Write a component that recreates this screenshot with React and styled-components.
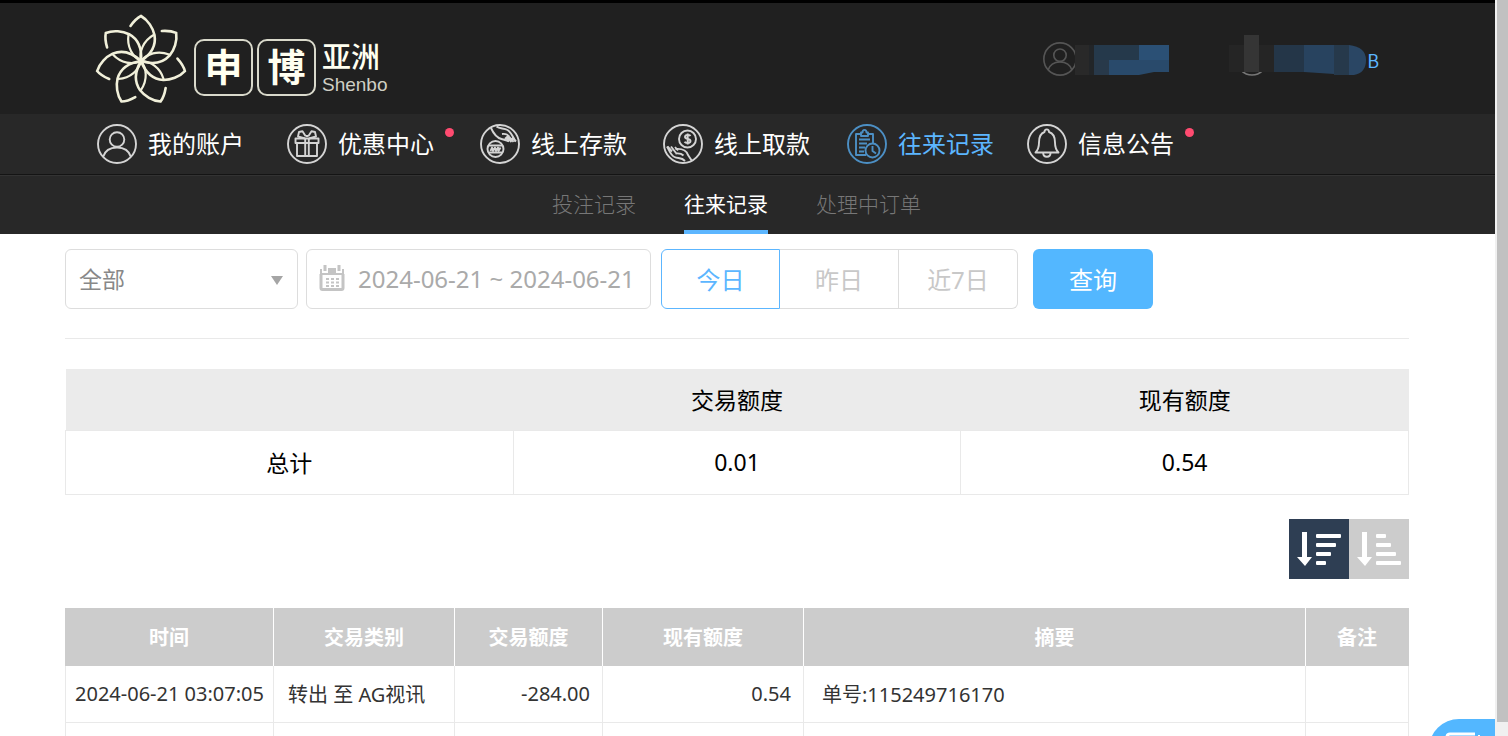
import { useState } from "react";
import styled, { createGlobalStyle } from "styled-components";

const navItems = [
    { label: "我的账户", icon: "user" },
    { label: "优惠中心", icon: "gift", dot: true },
    { label: "线上存款", icon: "deposit" },
    { label: "线上取款", icon: "withdraw" },
    { label: "往来记录", icon: "record", active: true },
    { label: "信息公告", icon: "bell", dot: true },
];

const subItems = ["投注记录", "往来记录", "处理中订单"];

const ranges = ["今日", "昨日", "近7日"];

const records = [
    { time: "2024-06-21 03:07:05", type: "转出 至 AG视讯", amount: "-284.00", balance: "0.54", summary: "单号:115249716170", remark: "" },
    { time: "", type: "", amount: "", balance: "", summary: "", remark: "" },
];

const iconShapes = {
    user: (
        <>
            <circle cx="20" cy="15.5" r="7.3" />
            <path d="M6 33C8 26.5 13 23.5 20 23.5S32 26.5 34 33" />
        </>
    ),
    gift: (
        <>
            <path d="M8.5 14.5h23v4.5h-23zM10 19h20v13H10zM18.2 14.5V32M21.8 14.5V32" />
            <path d="M18 14.5L11 12.5 12 8l3.5-.8L18.5 12M22 14.5l7-2L28 8l-3.5-.8L21.5 12M18.5 12h3" />
        </>
    ),
    deposit: (
        <>
            <path d="M11 4C13 8.5 16 13.5 21.5 15c3 .8 5.500 1.200 7.500 2.500M16.500 2.500c3 2.500 7 1.500 11 3.500 4 2.500 5.500 7 8 11.500" />
            <path d="M22 10c3-.5 5.500.3 7 2.500l4.500 5.500M25 15l2-2 4.500 5M29 17.500l-3-3.500M36 17.500l-4-4" />
            <circle cx="15.500" cy="25" r="8" />
            <path d="M9 21.500h13M9 28.500h13" />
            <path d="M10.500 27l1.500-3.500 1 3.500 2-3.500 1 3.500 2-3.500.5 3.500 2-3.500" />
        </>
    ),
    withdraw: (
        <>
            <circle cx="24.500" cy="15" r="8.500" />
            <path d="M27.500 12c-1-1.500-5.500-1.500-5.500 1 0 2.800 5.500 1.200 5.500 4 0 2.500-4.800 2.500-6 .8M24.700 9.500v11" />
            <path d="M4 22.500c2.500 4 3.500 8.500 7.500 10.500 3.500 1.800 7 0 10.500 4M12.500 25c6-.5 11 1.500 12.500 6l4 6" />
            <path d="M4.500 22.500l4.500 5M8 22.500l5 6.500M12 23l3 3.500M12.500 29.500c4-.5 6 0 8 2" />
        </>
    ),
    record: (
        <>
            <path d="M14 10H9v21h10M21 10h5v9M14 8.500h1.500c0-3.500 4-3.500 4 0H21V12h-7z" />
            <path d="M12 15.500h11M12 19.500h8M12 23.500h6M12 27.500h5" />
            <circle cx="25.500" cy="26.500" r="7" />
            <path d="M25.500 22v5l3.500 2.500" />
        </>
    ),
    bell: (
        <>
            <path d="M8.500 28.500c3-3 3.500-5.500 3.500-10C12 12.500 14.500 9 17.500 8c0-3.500 4.500-3.500 4.500 0 3.500 1 6 4.500 6 10.500 0 4.500.5 7 3.500 10z" />
            <path d="M16.200 29c0 5 7.300 5 7.300 0" />
        </>
    ),
};

const CircleIcon = ({ name, size = 40 }) => (
    <svg width={size} height={size} viewBox="0 0 40 40" fill="none" stroke="currentColor" strokeWidth="1.9" strokeLinejoin="round" aria-hidden="true">
        <circle cx="20" cy="20" r="19" />
        {iconShapes[name]}
    </svg>
);

const Flower = () => (
    <svg width="94" height="94" viewBox="-47 -48 94 94" fill="none" stroke="#f1f0da" strokeLinecap="round" aria-hidden="true">
        {[0, 1, 2, 3, 4, 5, 6].map((n) => (
            <g key={n} transform={`rotate(${(n * 360) / 7})`}>
                <path d="M-10.500 -35C-7 -40 -4 -43 0 -45C7 -41 12 -33 13.500 -26C15 -17 12 -8 0 0" strokeWidth="2.6" />
                <path d="M12.500 -26C2 -20 -2 -9 0 0" strokeWidth="2.200" />
            </g>
        ))}
    </svg>
);

const UserMask = () => (
    <svg width="94" height="32" viewBox="0 0 94 32" aria-hidden="true">
        <path d="M0 2h14v30H0z" fill="#292929" />
        <path d="M14 2h15v30H14z" fill="#222528" />
        <path d="M19 2h45v15H19z" fill="#25394b" />
        <path d="M64 2h30v15H64z" fill="#2b5075" />
        <path d="M19 17h15v15H19z" fill="#28394a" />
        <path d="M34 17h60v12H79L64 32H34z" fill="#294a6b" />
    </svg>
);

const BalanceMask = () => (
    <svg width="138" height="42" viewBox="0 0 138 42" aria-hidden="true">
        <circle cx="23" cy="25" r="15" fill="none" stroke="#777" strokeWidth="1.5" />
        <path d="M0 10h45v27H0z" fill="#252525" />
        <path d="M15 0h15v37H15z" fill="#353535" />
        <path d="M45 10h30v27H45z" fill="#243648" />
        <path d="M75 10h30v29L75 37z" fill="#28435f" />
        <path d="M105 10h15v30h-15z" fill="#26394b" />
        <path d="M120 10q17 2 17 15t-12 15h-5z" fill="#2a4664" />
    </svg>
);

const CalendarIcon = () => (
    <svg width="26" height="26" viewBox="0 0 26 26" fill="none" aria-hidden="true">
        <path d="M2 9V23q0 1.500 1.500 1.500h19Q24 24.500 24 23V9" stroke="#c4c4c4" strokeWidth="3" />
        <path d="M1 4h2v4h6V3h8v5h6V4h2v6H1z" fill="#c4c4c4" />
        <path d="M6 0v6M20 0v6" stroke="#c4c4c4" strokeWidth="3" />
        <path d="M7 14h3m2 0h3m2 0h3M7 17.500h3m2 0h3m2 0h3M7 21h3m2 0h3m2 0h3" stroke="#c4c4c4" strokeWidth="2" />
    </svg>
);

const SortIcon = ({ bars }) => (
    <svg width="60" height="60" viewBox="0 0 60 60" fill="#fff" aria-hidden="true">
        <path d="M13 13h5v25h5l-7 9-8-9h5z" />
        {bars.map((width, i) => (
            <rect key={width} x="27" y={15 + i * 9} width={width} height="4" rx="1" />
        ))}
    </svg>
);

const App = () => {
    const [range, setRange] = useState("今日");
    const [descending, setDescending] = useState(true);

    return (
        <Screen>
            <GlobalStyle />
            <Page>
                <Header>
                    <Logo>
                        <Flower />
                        <LogoBoxes>
                            <LogoBox>申</LogoBox>
                            <LogoBox>博</LogoBox>
                        </LogoBoxes>
                        <LogoRegion>
                            <span>亚洲</span>
                            <LogoLatin>Shenbo</LogoLatin>
                        </LogoRegion>
                    </Logo>
                    <Account>
                        <AccountUser>
                            <CircleIcon name="user" size={34} />
                            <UserMask />
                        </AccountUser>
                        <Balance>
                            <BalanceMask />
                            <span>B</span>
                        </Balance>
                    </Account>
                </Header>
                <MainNav>
                    {navItems.map((item) => (
                        <NavLink key={item.label} href="#" $active={item.active}>
                            <CircleIcon name={item.icon} />
                            <NavLabel>
                                {item.label}
                                {item.dot && <Dot />}
                            </NavLabel>
                        </NavLink>
                    ))}
                </MainNav>
                <SubNav>
                    {subItems.map((item) => (
                        <SubLink key={item} href="#" $active={item === "往来记录"}>{item}</SubLink>
                    ))}
                </SubNav>
                <Content>
                    <Filters onSubmit={(e) => e.preventDefault()}>
                        <SelectWrap>
                            <TypeSelect aria-label="交易类别">
                                <option>全部</option>
                            </TypeSelect>
                            <Caret />
                        </SelectWrap>
                        <DateField>
                            <CalendarIcon />
                            <DateInput aria-label="日期" defaultValue="2024-06-21 ~ 2024-06-21" />
                        </DateField>
                        <RangeGroup>
                            {ranges.map((item) => (
                                <RangeButton key={item} type="button" $active={item === range} onClick={() => setRange(item)}>{item}</RangeButton>
                            ))}
                        </RangeGroup>
                        <SearchButton type="submit">查询</SearchButton>
                    </Filters>
                    <TotalTable>
                        <thead>
                            <tr>
                                <th></th>
                                <th>交易额度</th>
                                <th>现有额度</th>
                            </tr>
                        </thead>
                        <tbody>
                            <tr>
                                <td>总计</td>
                                <td>0.01</td>
                                <td>0.54</td>
                            </tr>
                        </tbody>
                    </TotalTable>
                    <SortBar>
                        <SortButton type="button" aria-label="降序" $active={descending} onClick={() => setDescending(true)}>
                            <SortIcon bars={[25, 20, 15, 10]} />
                        </SortButton>
                        <SortButton type="button" aria-label="升序" $active={!descending} onClick={() => setDescending(false)}>
                            <SortIcon bars={[10, 15, 20, 25]} />
                        </SortButton>
                    </SortBar>
                    <RecordTable>
                        <thead>
                            <tr>
                                <HeadCell $width="209px">时间</HeadCell>
                                <HeadCell $width="181px">交易类别</HeadCell>
                                <HeadCell $width="148px">交易额度</HeadCell>
                                <HeadCell $width="201px">现有额度</HeadCell>
                                <HeadCell>摘要</HeadCell>
                                <HeadCell $width="103px">备注</HeadCell>
                            </tr>
                        </thead>
                        <tbody>
                            {records.map((row, index) => (
                                <tr key={index}>
                                    <Cell $align="center" $pad="4px">{row.time}</Cell>
                                    <Cell $pad="14px">{row.type}</Cell>
                                    <Cell $align="right">{row.amount}</Cell>
                                    <Cell $align="right">{row.balance}</Cell>
                                    <Cell $pad="18px">{row.summary}</Cell>
                                    <Cell>{row.remark}</Cell>
                                </tr>
                            ))}
                        </tbody>
                    </RecordTable>
                </Content>
                <ChatButton type="button" aria-label="在线客服">
                    <svg width="42" height="36" viewBox="0 0 42 36" fill="none" stroke="#fff" strokeWidth="3" aria-hidden="true">
                        <path d="M30 2H5Q2 2 2 5v18q0 3 3 3h6v7l8-7h14q3 0 3-3V12" />
                        <path d="M20 17L34 3l4 4-14 14h-4z" fill="#fff" strokeWidth="1" />
                    </svg>
                </ChatButton>
            </Page>
            <ScrollTrack>
                <ScrollThumb />
            </ScrollTrack>
        </Screen>
    );
};

export default App;

const GlobalStyle = createGlobalStyle`
    * {
        box-sizing: border-box;
    }

    body {
        margin: 0;
        background: #fff;
        font-family: "Noto Sans", "Noto Sans CJK SC", sans-serif;
    }

    button, input, select {
        font-family: inherit;
        margin: 0;
    }

    a {
        text-decoration: none;
    }

    svg {
        display: block;
        flex-shrink: 0;
    }
`

const Screen = styled.div`
    display: flex;
    height: 100vh;
    overflow: hidden;
`

const Page = styled.div`
    position: relative;
    flex: 1;
    min-width: 0;
    overflow: hidden;
`

const Header = styled.header`
    display: flex;
    justify-content: space-between;
    align-items: flex-start;
    height: 114px;
    padding: 10px 116px 0 94px;
    border-top: 3px solid #000;
    background: #202020;
`

const Logo = styled.h1`
    display: flex;
    align-items: flex-start;
    margin: 0;
    color: #fffff0;
`

const LogoBoxes = styled.span`
    display: flex;
    gap: 4px;
    margin: 26px 6px 0 6px;
`

const LogoBox = styled.span`
    display: flex;
    align-items: center;
    justify-content: center;
    width: 59px;
    height: 57px;
    padding-bottom: 4px;
    border: 2px solid #d9d9cb;
    border-radius: 10px;
    font-size: 38px;
    line-height: 38px;
    font-weight: 700;
`

const LogoRegion = styled.span`
    display: flex;
    flex-direction: column;
    padding-top: 28px;
    font-size: 29px;
    line-height: 32px;
    font-weight: 500;
`

const LogoLatin = styled.span`
    color: #cfcfc4;
    font-family: "Liberation Sans", sans-serif;
    font-size: 19px;
    line-height: 24px;
    font-weight: 400;
`

const Account = styled.div`
    display: flex;
    align-items: flex-start;
    gap: 60px;
    padding-top: 22px;
`

const AccountUser = styled.div`
    display: flex;
    align-items: center;
    height: 48px;
    color: #555;

    svg + svg {
        margin-left: -2px;
    }
`

const Balance = styled.div`
    display: flex;
    align-items: flex-start;
    color: #5cb6ff;
    font-family: "Noto Sans CJK SC", sans-serif;
    font-size: 18px;
    line-height: 50px;
`

const MainNav = styled.nav`
    display: grid;
    grid-template-columns: 190px 193px 183px 184px 180px auto;
    align-items: center;
    height: 61px;
    padding-left: 97px;
    border-bottom: 1px solid #141414;
    background: #282828;
`

const NavLink = styled.a`
    display: flex;
    align-items: center;
    gap: 11px;
    color: ${({ $active }) => ($active ? "#5cb6ff" : "#fff")};
    font-size: 24px;
    line-height: 40px;

    svg {
        color: ${({ $active }) => ($active ? "#4c8fc4" : "#d4d4d4")};
    }
`

const NavLabel = styled.span`
    position: relative;
    white-space: nowrap;
`

const Dot = styled.i`
    position: absolute;
    top: 4px;
    right: -20px;
    width: 9px;
    height: 9px;
    border-radius: 50%;
    background: #ff4b70;
`

const SubNav = styled.nav`
    display: flex;
    justify-content: center;
    gap: 48px;
    height: 59px;
    padding: 0 87px 0 65px;
    border-top: 1px solid #333;
    background: #282828;
`

const SubLink = styled.a`
    height: 58px;
    border-bottom: 4px solid ${({ $active }) => ($active ? "#5cb6ff" : "transparent")};
    color: ${({ $active }) => ($active ? "#fff" : "#777")};
    font-size: 21px;
    font-weight: ${({ $active }) => ($active ? 400 : 300)};
    line-height: 56px;
    white-space: nowrap;
`

const Content = styled.main`
    padding: 15px 86px 0 65px;
`

const Filters = styled.form`
    display: flex;
    height: 90px;
    border-bottom: 1px solid #e9e9e9;
`

const SelectWrap = styled.div`
    position: relative;
    width: 233px;
    height: 60px;
    margin-right: 8px;
`

const TypeSelect = styled.select`
    appearance: none;
    width: 100%;
    height: 60px;
    padding: 0 13px;
    border: 1px solid #ddd;
    border-radius: 6px;
    background: #fff;
    color: #888;
    font-size: 23px;
`

const Caret = styled.i`
    position: absolute;
    top: 27px;
    right: 15px;
    border: 6px solid transparent;
    border-top: 9px solid #a5a5a5;
    border-bottom: 0;
    pointer-events: none;
`

const DateField = styled.label`
    display: flex;
    align-items: center;
    gap: 13px;
    width: 345px;
    height: 60px;
    margin-right: 10px;
    padding: 0 4px 2px 12px;
    border: 1px solid #ddd;
    border-radius: 6px;
`

const DateInput = styled.input`
    flex: 1;
    min-width: 0;
    padding: 0;
    border: 0;
    outline: 0;
    color: #aaa;
    font-size: 24px;
`

const RangeGroup = styled.div`
    display: flex;
    height: 60px;
    margin-right: 15px;
`

const RangeButton = styled.button`
    width: 119px;
    padding: 0 0 2px;
    border: 1px solid ${({ $active }) => ($active ? "#5cb6ff" : "#ddd")};
    border-left-width: ${({ $active }) => ($active ? "1px" : "0")};
    background: #fff;
    color: ${({ $active }) => ($active ? "#5cb6ff" : "#c8c8c8")};
    font-size: 24px;

    &:first-child {
        border-radius: 6px 0 0 6px;
    }

    &:last-child {
        border-radius: 0 6px 6px 0;
    }
`

const SearchButton = styled.button`
    width: 120px;
    height: 60px;
    padding: 0 0 2px;
    border: 0;
    border-radius: 6px;
    background: #53b7ff;
    color: #fff;
    font-size: 24px;
`

const TotalTable = styled.table`
    width: 100%;
    margin-top: 30px;
    border-collapse: collapse;
    table-layout: fixed;
    font-size: 23px;
    text-align: center;
    color: #000;

    th {
        height: 61px;
        padding: 0;
        background: #ebebeb;
        font-weight: 400;
    }

    td {
        height: 64px;
        padding: 0;
        border: 1px solid #e9e9e9;
    }
`

const SortBar = styled.div`
    display: flex;
    justify-content: flex-end;
    margin: 24px 0 29px;
`

const SortButton = styled.button`
    width: 60px;
    height: 60px;
    padding: 0;
    border: 0;
    background: ${({ $active }) => ($active ? "#2e3e53" : "#ccc")};
`

const RecordTable = styled.table`
    width: 100%;
    border-collapse: separate;
    border-spacing: 0;
    table-layout: fixed;
    font-size: 20px;
`

const HeadCell = styled.th`
    width: ${({ $width }) => $width || "auto"};
    height: 58px;
    padding: 0;
    border-right: 1px solid #fff;
    background: #ccc;
    color: #fff;
    font-weight: 700;

    &:last-child {
        border-right-color: #ccc;
    }
`

const Cell = styled.td`
    height: 57px;
    padding: 0 ${({ $pad }) => $pad || "12px"};
    border-right: 1px solid #e9e9e9;
    border-bottom: 1px solid #e9e9e9;
    color: #333;
    text-align: ${({ $align }) => $align || "left"};
    white-space: nowrap;

    &:first-child {
        border-left: 1px solid #e9e9e9;
    }
`

const ChatButton = styled.button`
    position: absolute;
    right: 0;
    bottom: -43px;
    display: flex;
    width: 66px;
    height: 60px;
    padding: 13px 0 0 16px;
    border: 0;
    border-radius: 30px 0 0 30px;
    background: #53b7ff;
`

const ScrollTrack = styled.div`
    width: 13px;
    padding: 0 0 14px 2px;
    background: #f0f0f0;
`

const ScrollThumb = styled.div`
    height: 100%;
    background: #c1c1c1;
`
